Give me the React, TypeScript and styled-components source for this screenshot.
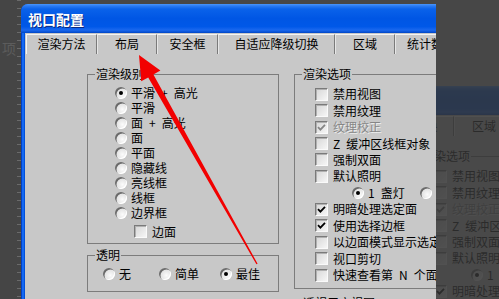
import React from "react";
import styled, { createGlobalStyle, css } from "styled-components";

const GlobalStyle = createGlobalStyle`
  html, body { margin: 0; padding: 0; background: #474747; }
  body { width: 499px; height: 299px; overflow: hidden; }
`;

const FONT = `"Noto Sans CJK SC", "Liberation Sans", sans-serif`;

const Screen = styled.div`
  position: relative;
  width: 499px;
  height: 299px;
  overflow: hidden;
  background: #b8b8b8;
  font-family: ${FONT};
`;

const Dim = styled.div`
  position: absolute;
  inset: 0;
  background: rgba(51, 51, 51, 0.85);
`;

const SideStrip = styled.div`
  position: absolute;
  left: 0;
  top: 0;
  width: 21px;
  height: 299px;
  background:
    repeating-linear-gradient(to bottom, #6a6a6a 0 1px, transparent 1px 8px) right top / 4px 100% no-repeat,
    #454545;
`;

const GhostText = styled.span`
  position: absolute;
  left: 2px;
  top: 40px;
  font-size: 14px;
  line-height: 16px;
  color: #5c5c5c;
`;

const Frame = styled.div<{ $left: number; $top: number }>`
  position: absolute;
  left: ${(p) => p.$left}px;
  top: ${(p) => p.$top}px;
  width: 415px;
  height: 340px;
  overflow: hidden;
  border-radius: 7px 0 0 0;
  background: linear-gradient(to right, #0040c4 0 1px, #1468f2 1px 3px, #0050dc 3px 4px, #0054e3 4px);
  display: flex;
  flex-direction: column;
  font-family: ${FONT};
  color: #000;
`;

const TitleBar = styled.div`
  flex: none;
  height: 29px;
  display: flex;
  align-items: center;
  padding-left: 7px;
  background: linear-gradient(
    to bottom,
    #4a96fa 0px,
    #2a7af2 2px,
    #0a62ea 5px,
    #0056e4 50%,
    #0058e8 78%,
    #1a68ee 90%,
    #0046c6 100%
  );
  color: #fff;
  font-size: 14px;
  font-weight: bold;
  line-height: 16px;
  text-shadow: 1px 1px 0 #0b2a80;
`;

const Body = styled.div`
  flex: 1;
  margin-left: 4px;
  background: #c8c8c8;
  display: flex;
  flex-direction: column;
`;

const TabRow = styled.div`
  flex: none;
  display: flex;
  height: 20px;
  margin-top: 1px;
  padding-left: 1px;
`;

const Tab = styled.div<{ $w: number; $first?: boolean }>`
  flex: none;
  box-sizing: border-box;
  width: ${(p) => p.$w}px;
  height: 20px;
  border-top: 1px solid #f4f4f4;
  border-left: 1px solid ${(p) => (p.$first ? "#f4f4f4" : "#e6e6e6")};
  border-right: 1px solid #7a7a7a;
  font-size: 12px;
  line-height: 18px;
  text-align: center;
  white-space: nowrap;
`;

const Panel = styled.div`
  display: flex;
  gap: 15px;
  padding: 20px 0 0 62px;
`;

const Column = styled.div<{ $w: number }>`
  display: flex;
  flex-direction: column;
  gap: 11px;
  width: ${(p) => p.$w}px;
  flex: none;
`;

const GroupBox = styled.div<{ $h: number; $pt: number; $pl: number; $mt?: number }>`
  position: relative;
  box-sizing: border-box;
  height: ${(p) => p.$h}px;
  margin-top: ${(p) => p.$mt ?? 0}px;
  border: 1px solid #7c7c7c;
  padding: ${(p) => p.$pt}px 0 0 ${(p) => p.$pl}px;
  display: flex;
  flex-direction: column;
  flex: none;
`;

const Legend = styled.span`
  position: absolute;
  top: -8px;
  left: 7px;
  padding: 0 1px;
  background: #c8c8c8;
  font-size: 12px;
  line-height: 14px;
  white-space: nowrap;
`;

const Row = styled.div<{ $h: number; $indent?: number; $mt?: number }>`
  display: flex;
  align-items: center;
  height: ${(p) => p.$h}px;
  margin-left: ${(p) => p.$indent ?? 0}px;
  margin-top: ${(p) => p.$mt ?? 0}px;
  font-size: 12px;
  line-height: 14px;
  white-space: nowrap;
`;

const Item = styled.div<{ $w?: number; $gap: number }>`
  display: flex;
  align-items: center;
  gap: ${(p) => p.$gap}px;
  width: ${(p) => (p.$w ? `${p.$w}px` : "auto")};
  flex: none;
`;

const Label = styled.span<{ $disabled?: boolean }>`
  ${(p) =>
    p.$disabled &&
    css`
      color: #868686;
      text-shadow: 1px 1px 0 #ececec;
    `}
`;

const RadioDot = styled.span<{ $checked?: boolean }>`
  position: relative;
  flex: none;
  width: 12px;
  height: 12px;
  border-radius: 50%;
  background: radial-gradient(circle at 62% 62%, #fbfbfb 0, #e2e2e2 55%, #cfcfcf 100%);
  box-shadow: inset 1.5px 1.5px 0 #6a6a6a, inset -1px -1px 0 #ffffff;
  ${(p) =>
    p.$checked &&
    css`
      &::after {
        content: "";
        position: absolute;
        left: 4px;
        top: 4px;
        width: 4px;
        height: 4px;
        border-radius: 50%;
        background: #000;
      }
    `}
`;

const CheckBoxBox = styled.span`
  flex: none;
  box-sizing: border-box;
  width: 13px;
  height: 13px;
  border-top: 1px solid #7a7a7a;
  border-left: 1px solid #7a7a7a;
  border-right: 1px solid #fafafa;
  border-bottom: 1px solid #fafafa;
  box-shadow: inset 1px 1px 0 #b0b0b0;
  background: linear-gradient(135deg, #d6d6d6, #f6f6f6);
  display: flex;
  align-items: center;
  justify-content: center;
`;

const ArrowLayer = styled.svg`
  position: absolute;
  left: 0;
  top: 0;
  pointer-events: none;
`;

const Radio: React.FC<{ checked?: boolean; label: string; w?: number }> = ({ checked, label, w }) => (
  <Item $w={w} $gap={4}>
    <RadioDot $checked={checked} />
    <Label>{label}</Label>
  </Item>
);

const Check: React.FC<{ checked?: boolean; disabled?: boolean; label: string }> = ({ checked, disabled, label }) => (
  <Item $gap={5}>
    <CheckBoxBox>
      {checked && (
        <svg width="9" height="9" viewBox="0 0 9 9">
          <path
            d="M1 4.2 L3.4 6.6 L8 1.8"
            fill="none"
            stroke={disabled ? "#858585" : "#000"}
            strokeWidth="1.8"
          />
        </svg>
      )}
    </CheckBoxBox>
    <Label $disabled={disabled}>{label}</Label>
  </Item>
);

const tabs: [string, number][] = [
  ["渲染方法", 71],
  ["布局", 60],
  ["安全框", 61],
  ["自适应降级切换", 117],
  ["区域", 60],
  ["统计数据", 72],
];

const levels = ["平滑\u2002+\u2002高光", "平滑", "面\u2002+\u2002高光", "面", "平面", "隐藏线", "亮线框", "线框", "边界框"];

const R = 16.45;

const Dialog: React.FC<{ left: number; top: number }> = ({ left, top }) => (
  <Frame $left={left} $top={top}>
    <TitleBar>视口配置</TitleBar>
    <Body>
      <TabRow>
        {tabs.map(([t, w], i) => (
          <Tab key={t} $w={w} $first={i === 0}>
            {t}
          </Tab>
        ))}
      </TabRow>
      <Panel>
        <Column $w={192}>
          <GroupBox $h={170} $pt={10} $pl={27}>
            <Legend>渲染级别</Legend>
            {levels.map((l, i) => (
              <Row key={l} $h={15}>
                <Radio checked={i === 0} label={l} />
              </Row>
            ))}
            <Row $h={15} $indent={19} $mt={4}>
              <Check label="边面" />
            </Row>
          </GroupBox>
          <GroupBox $h={37} $pt={10} $pl={15}>
            <Legend>透明</Legend>
            <Row $h={15}>
              <Radio label="无" w={56} />
              <Radio label="简单" w={61} />
              <Radio checked label="最佳" />
            </Row>
          </GroupBox>
          <GroupBox $h={60} $pt={10} $pl={15} $mt={3}>
            <Legend>大视口</Legend>
          </GroupBox>
        </Column>
        <Column $w={200}>
          <GroupBox $h={215} $pt={11} $pl={20}>
            <Legend>渲染选项</Legend>
            <Row $h={R}><Check label="禁用视图" /></Row>
            <Row $h={R}><Check label="禁用纹理" /></Row>
            <Row $h={R}><Check checked disabled label="纹理校正" /></Row>
            <Row $h={R}><Check label={"Z\u2002缓冲区线框对象"} /></Row>
            <Row $h={R}><Check label="强制双面" /></Row>
            <Row $h={R}><Check label="默认照明" /></Row>
            <Row $h={R} $indent={37}>
              <Radio checked label={"1\u2002盏灯"} w={68} />
              <Radio label={"2\u2002盏灯"} />
            </Row>
            <Row $h={R}><Check checked label="明暗处理选定面" /></Row>
            <Row $h={R}><Check checked label="使用选择边框" /></Row>
            <Row $h={R}><Check label="以边面模式显示选定对象" /></Row>
            <Row $h={R}><Check label="视口剪切" /></Row>
            <Row $h={R}><Check label={"快速查看第\u2002N\u2002个面"} /></Row>
          </GroupBox>
          <GroupBox $h={60} $pt={10} $pl={20} $mt={3}>
            <Legend>透视用户视图</Legend>
          </GroupBox>
        </Column>
      </Panel>
    </Body>
  </Frame>
);

export default function App() {
  return (
    <Screen>
      <GlobalStyle />
      <Dialog left={140} top={86} />
      <Dim />
      <SideStrip>
        <GhostText>项</GhostText>
      </SideStrip>
      <Dialog left={21} top={4} />
      <ArrowLayer width="499" height="299" viewBox="0 0 499 299">
        <polygon
          points="139,55 160.4,70.5 153.4,74.4 257.6,263.7 256.4,264.3 148.2,77.4 141.2,81.3"
          fill="#f20000"
        />
      </ArrowLayer>
    </Screen>
  );
}
